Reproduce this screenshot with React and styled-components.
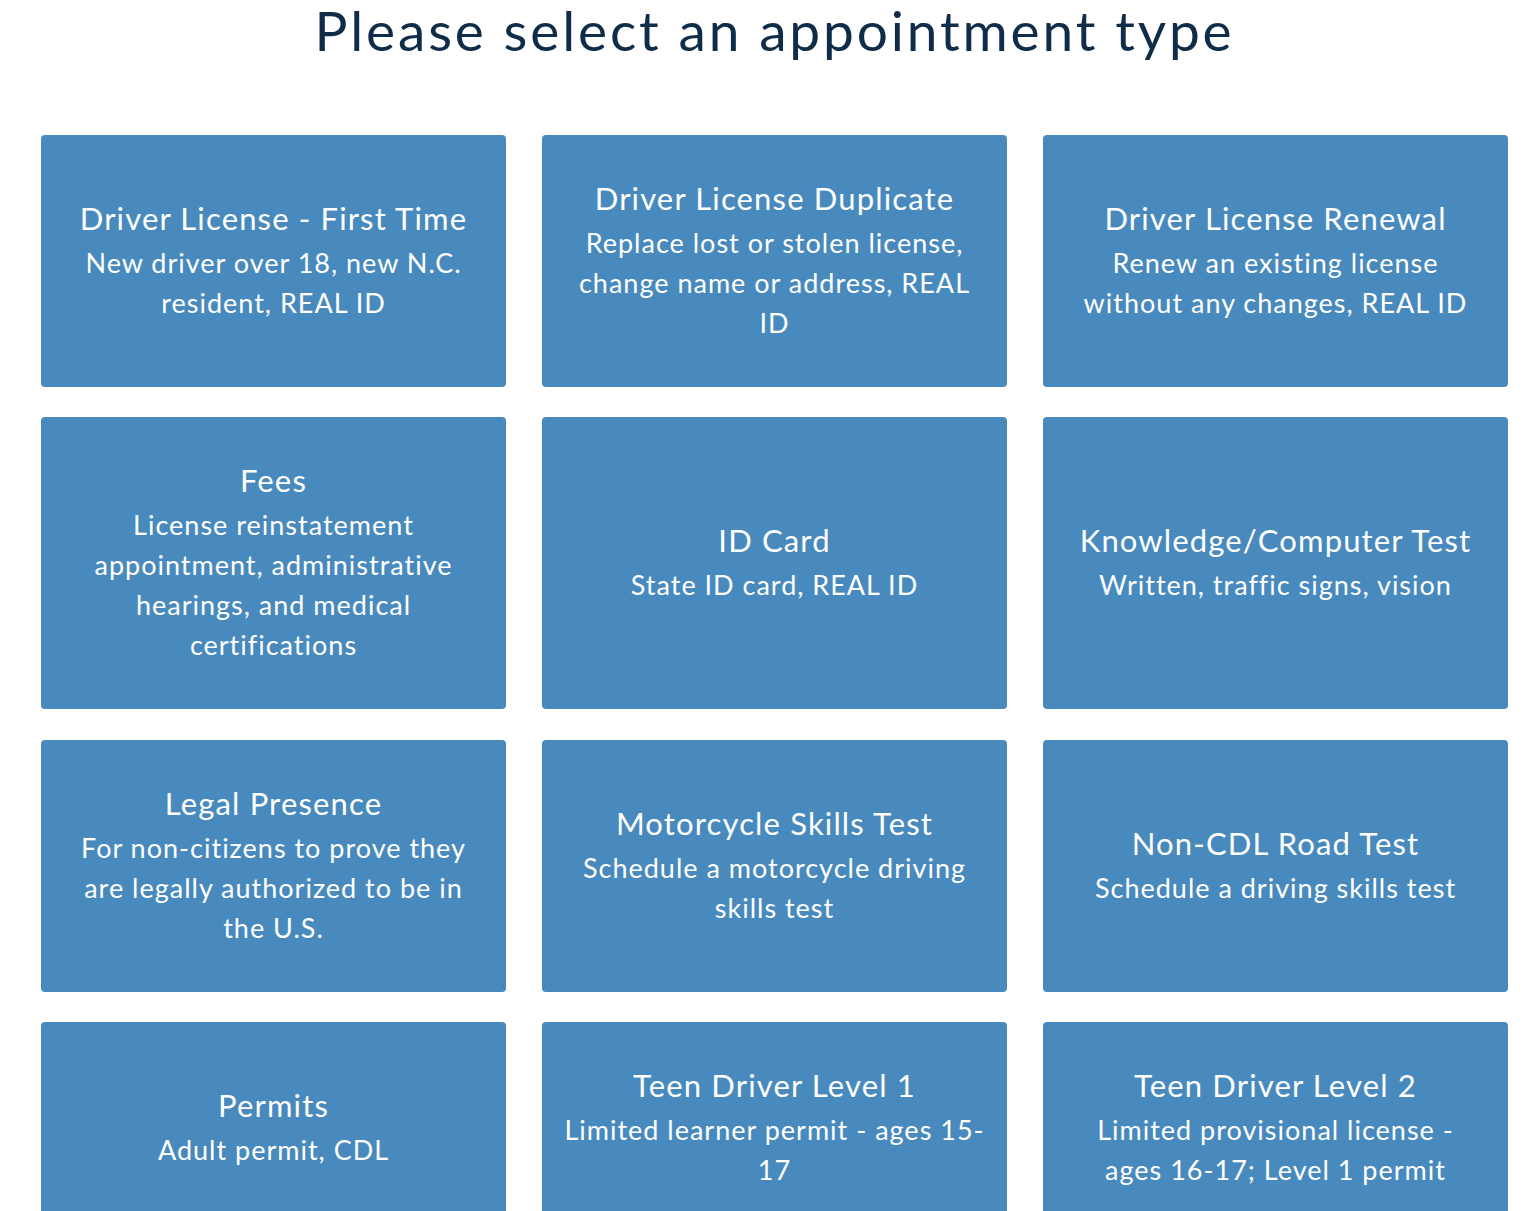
import React from 'react'
import styled, { createGlobalStyle } from 'styled-components'

const Global = createGlobalStyle`
  body {
    margin: 0;
    background: #ffffff;
    font-family: Lato, "Liberation Sans", sans-serif;
  }
`

const Page = styled.div`
  padding: 0 28px 0 41px;
`

const Heading = styled.h1`
  margin: 0;
  padding: 0;
  height: 135px;
  font-size: 55px;
  font-weight: 400;
  line-height: 60px;
  letter-spacing: 2.85px;
  color: #0f2c48;
  text-align: center;
`

const Grid = styled.div`
  display: grid;
  grid-template-columns: repeat(3, 465px);
  column-gap: 36px;
  row-gap: 30.4px;
`

const Card = styled.button`
  display: flex;
  flex-direction: column;
  justify-content: center;
  align-items: center;
  padding: 44px 20px;
  border: none;
  border-radius: 4px;
  background: #488abd;
  color: #ffffff;
  font-family: inherit;
  text-align: center;
  cursor: pointer;
`

const CardTitle = styled.div`
  font-size: 31px;
  line-height: 38px;
  margin-bottom: 6px;
  letter-spacing: 1.15px;
  white-space: nowrap;
`

const CardText = styled.div`
  font-size: 27px;
  line-height: 40px;
  letter-spacing: 1px;
`

const types = [
  { title: 'Driver License - First Time', text: 'New driver over 18, new N.C. resident, REAL ID' },
  { title: 'Driver License Duplicate', text: 'Replace lost or stolen license, change name or address, REAL ID' },
  { title: 'Driver License Renewal', text: 'Renew an existing license without any changes, REAL ID' },
  { title: 'Fees', text: 'License reinstatement appointment, administrative hearings, and medical certifications' },
  { title: 'ID Card', text: 'State ID card, REAL ID' },
  { title: 'Knowledge/Computer Test', text: 'Written, traffic signs, vision' },
  { title: 'Legal Presence', text: 'For non-citizens to prove they are legally authorized to be in the U.S.' },
  { title: 'Motorcycle Skills Test', text: 'Schedule a motorcycle driving skills test' },
  { title: 'Non-CDL Road Test', text: 'Schedule a driving skills test' },
  { title: 'Permits', text: 'Adult permit, CDL' },
  { title: 'Teen Driver Level 1', text: 'Limited learner permit - ages 15-17' },
  // the original font wraps this one before "ages", Lato doesn't
  { title: 'Teen Driver Level 2', text: ['Limited provisional license -', 'ages 16-17; Level 1 permit'] },
]

function Lines({ text }) {
  if (!Array.isArray(text)) return text
  return text.map((line, i) => (
    <React.Fragment key={i}>
      {i > 0 && <br />}
      {line}
    </React.Fragment>
  ))
}

export default function App() {
  return (
    <>
      <Global />
      <Page>
        <Heading>Please select an appointment type</Heading>
        <Grid>
          {types.map(t => (
            <Card key={t.title}>
              <CardTitle>{t.title}</CardTitle>
              <CardText><Lines text={t.text} /></CardText>
            </Card>
          ))}
        </Grid>
      </Page>
    </>
  )
}
